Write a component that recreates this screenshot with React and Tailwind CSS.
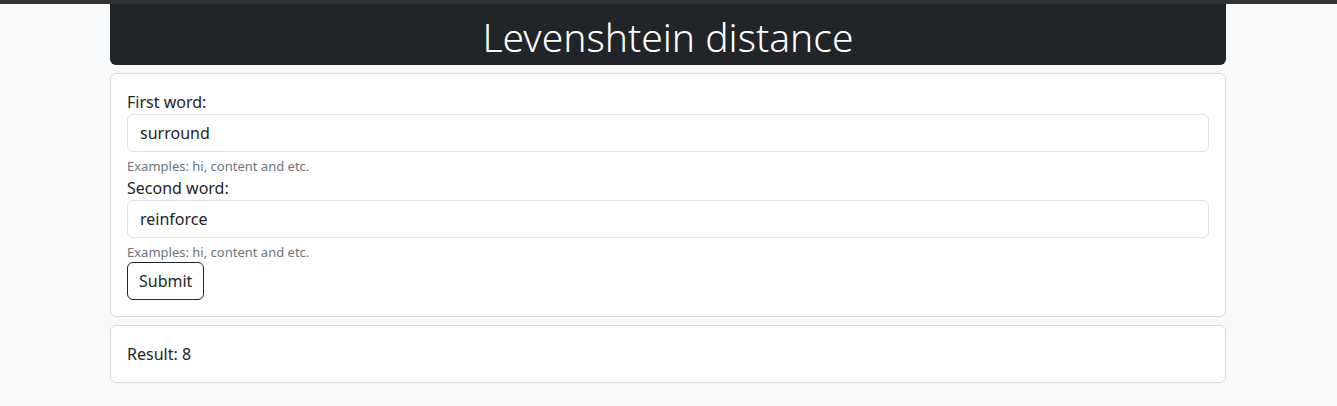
import React, { useState } from 'react';

const font = { fontFamily: '"Noto Sans", "Open Sans", sans-serif' };

const Field = ({ label, value, onChange }) => (
  <div>
    <label className="block h-6 leading-6 text-base text-[#212529]">{label}</label>
    <input
      type="text"
      value={value}
      onChange={(e) => onChange(e.target.value)}
      className="block w-full h-[38px] px-3 border border-[#dee2e6] rounded-md bg-white text-base text-[#212529] outline-none"
    />
    <div className="mt-1 h-5 leading-5 text-[13px] text-[#6c757d]">
      Examples: hi, content and etc.
    </div>
  </div>
);

const App = () => {
  const [first, setFirst] = useState('surround');
  const [second, setSecond] = useState('reinforce');
  const [result] = useState(8);

  return (
    <div className="min-h-[406px] bg-[#f8f9fa] text-[#212529]" style={font}>
      <div className="h-1 bg-[#323232]" />
      <div className="w-[1116px] ml-[110px] flex flex-col gap-2">
        <div className="h-[61px] bg-[#212529] rounded-b-md flex items-center justify-center">
          <h1 className="text-[39px] leading-[48px] font-light text-white pt-1">
            Levenshtein distance
          </h1>
        </div>
        <form
          onSubmit={(e) => e.preventDefault()}
          className="bg-white border border-[#d6d8da] rounded-md p-4"
        >
          <Field label="First word:" value={first} onChange={setFirst} />
          <Field label="Second word:" value={second} onChange={setSecond} />
          <button
            type="submit"
            className="h-[38px] px-[11px] border border-[#212529] rounded-md text-base text-[#212529] bg-white"
          >
            Submit
          </button>
        </form>
        <div className="bg-white border border-[#d6d8da] rounded-md p-4">
          <p className="h-6 leading-6 text-base">Result: {result}</p>
        </div>
      </div>
    </div>
  );
};

export default App;
